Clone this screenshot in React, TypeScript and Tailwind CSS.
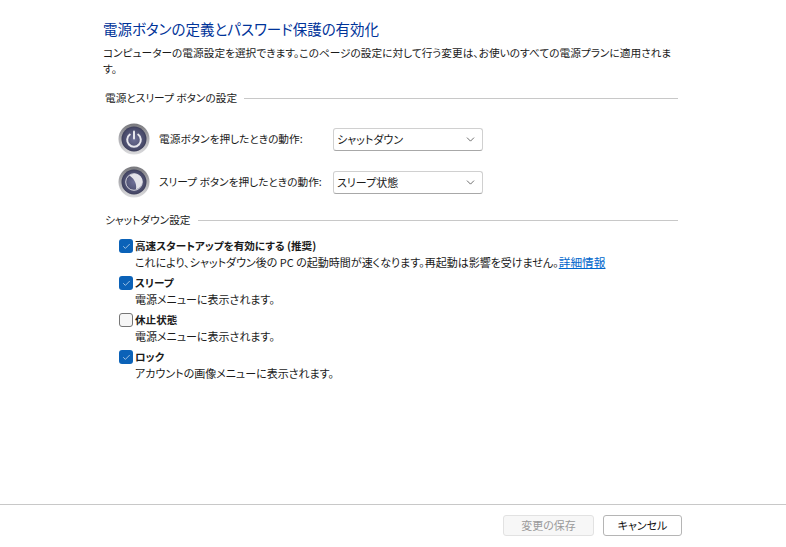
import { ChevronDown, Check } from "lucide-react";

const font = "[font-family:'Noto_Sans_CJK_JP','Noto_Sans',sans-serif] [font-feature-settings:'palt']";

const SectionHeader = ({ title }: { title: string }) => (
  <div className="flex items-center pl-[2px] pr-[108px]">
    <span className="text-[10.7px] leading-[16px] text-[#1a1a1a] whitespace-nowrap">{title}</span>
    <div className="ml-[7px] h-px flex-1 bg-[#c8c8c8]" />
  </div>
);

const PowerIcon = ({ sleep }: { sleep?: boolean }) => (
  <svg width="32" height="32" viewBox="0 0 32 32" className="shrink-0">
    <defs>
      <linearGradient id={sleep ? "ringS" : "ringP"} x1="0" y1="0" x2="0" y2="1">
        <stop offset="0" stopColor="#77777c" />
        <stop offset="0.5" stopColor="#b0b0b4" />
        <stop offset="1" stopColor="#dcdcde" />
      </linearGradient>
      <radialGradient id={sleep ? "coreS" : "coreP"} cx="0.5" cy="0.5" r="0.55">
        <stop offset="0" stopColor="#6f7198" />
        <stop offset="0.8" stopColor="#474968" />
        <stop offset="1" stopColor="#2f304a" />
      </radialGradient>
    </defs>
    <circle cx="16" cy="16" r="15.5" fill={`url(#${sleep ? "ringS" : "ringP"})`} />
    <circle cx="16" cy="16" r="12.5" fill={`url(#${sleep ? "coreS" : "coreP"})`} />
    {sleep ? (
      <g>
        <circle cx="16" cy="16" r="8.3" fill="none" stroke="#d6d6de" strokeWidth="1" />
        <path d="M11.5 9.6a7.6 7.6 0 0 1 10.2 11.6a7.6 7.6 0 0 1 -3.7 2.2c.8 -4 -.4 -9.6 -6.5 -13.8z" fill="#e4e4ea" />
      </g>
    ) : (
      <g fill="none" stroke="#e8e8ee" strokeWidth="2" strokeLinecap="round">
        <path d="M11.8 11.5a6.8 6.8 0 1 0 8.4 0" />
        <path d="M16 8.5v7" />
      </g>
    )}
  </svg>
);

const ActionRow = ({ label, value, sleep }: { label: string; value: string; sleep?: boolean }) => (
  <div className="flex items-center pl-[15px]">
    <PowerIcon sleep={sleep} />
    <span className="ml-[9px] w-[174px] text-[10.7px] leading-[16px] text-[#1a1a1a] whitespace-nowrap">{label}</span>
    <div className="flex h-[23px] w-[150px] items-center justify-between rounded-[3px] border border-[#d0d0d0] border-b-[#a8a8a8] bg-white pl-[3px] pr-[5px] text-[11px] text-[#1a1a1a]">
      <span>{value}</span>
      <ChevronDown size={13} strokeWidth={1.3} className="text-[#333]" />
    </div>
  </div>
);

const Option = ({ label, desc, checked, link }: { label: string; desc: string; checked: boolean; link?: string }) => (
  <div className="flex h-[34px] pl-[16px]">
    <div
      className={
        checked
          ? "mt-[2px] flex h-[14px] w-[14px] shrink-0 items-center justify-center rounded-[3px] bg-[#0b62b8]"
          : "mt-[2px] h-[14px] w-[14px] shrink-0 rounded-[3px] border border-[#767676] bg-[#f6f6f6]"
      }
    >
      {checked && <Check size={9} strokeWidth={1.6} className="text-white" />}
    </div>
    <div className="ml-[2px]">
      <div className="text-[10.6px] leading-[17px] font-bold text-[#1a1a1a] whitespace-nowrap">{label}</div>
      <div className="text-[11px] leading-[17px] text-[#1a1a1a] whitespace-nowrap">
        {desc}
        {link && <span className="text-[11.7px] leading-none text-[#0066cc] underline">{link}</span>}
      </div>
    </div>
  </div>
);

export default function App() {
  return (
    <div className={`flex h-[547px] w-[786px] flex-col overflow-hidden bg-white ${font}`}>
      <div className="flex-1 pl-[103px] pt-[19px]">
        <h1 className="text-[14.5px] leading-[20px] font-normal text-[#003399] whitespace-nowrap">
          電源ボタンの定義とパスワード保護の有効化
        </h1>
        <p className="mt-[6px] text-[10.7px] leading-[16px] text-[#1a1a1a] whitespace-nowrap">
          コンピューターの電源設定を選択できます。このページの設定に対して行う変更は、お使いのすべての電源プランに適用されま
          <br />
          す。
        </p>
        <div className="mt-[13px]">
          <SectionHeader title="電源とスリープ ボタンの設定" />
        </div>
        <div className="mt-[17px] flex flex-col gap-[11px]">
          <ActionRow label="電源ボタンを押したときの動作:" value="シャットダウン" />
          <ActionRow label="スリープ ボタンを押したときの動作:" value="スリープ状態" sleep />
        </div>
        <div className="mt-[14px]">
          <SectionHeader title="シャットダウン設定" />
        </div>
        <div className="mt-[9px] flex flex-col gap-[3px]">
          <Option
            label="高速スタートアップを有効にする (推奨)"
            desc="これにより、シャットダウン後の PC の起動時間が速くなります。再起動は影響を受けません。"
            link="詳細情報"
            checked
          />
          <Option label="スリープ" desc="電源メニューに表示されます。" checked />
          <Option label="休止状態" desc="電源メニューに表示されます。" checked={false} />
          <Option label="ロック" desc="アカウントの画像メニューに表示されます。" checked />
        </div>
      </div>
      <div className="flex h-[43px] items-start justify-end gap-[9px] border-t border-[#c8c8c8] pr-[104px] pt-[10px]">
        <div className="flex h-[21px] w-[91px] items-center justify-center rounded-[3px] border border-[#e2e2e2] bg-[#f7f7f7] text-[11px] text-[#9a9a9a]">
          変更の保存
        </div>
        <div className="flex h-[21px] w-[79px] items-center justify-center rounded-[3px] border border-[#b5b5b5] bg-white text-[11px] text-[#111]">
          キャンセル
        </div>
      </div>
    </div>
  );
}
